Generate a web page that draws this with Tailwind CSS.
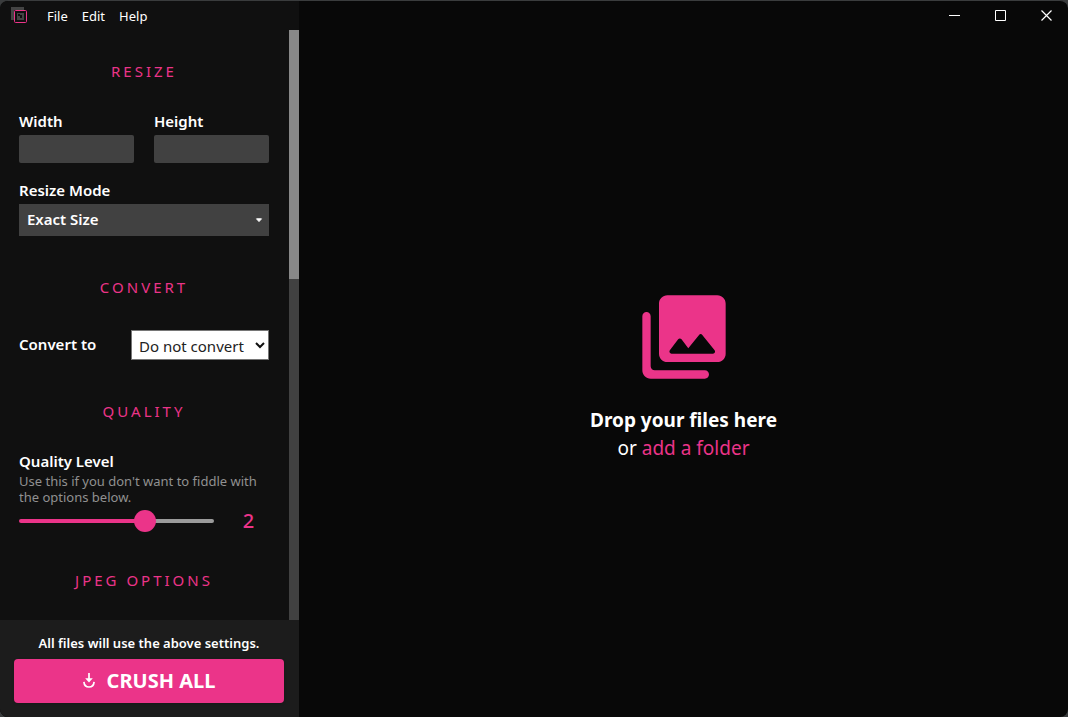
<!DOCTYPE html>
<html lang="en">
<head>
  <meta charset="UTF-8">
  <meta name="viewport" content="width=device-width, initial-scale=1.0">
  <title>Crush Images</title>
  <script src="https://cdn.jsdelivr.net/npm/@tailwindcss/browser@4"></script>
</head>

<body class="bg-[#3a3c3d] text-white h-screen overflow-hidden font-['Noto_Sans','Open_Sans',sans-serif]">

<div class="h-full flex rounded-lg overflow-hidden border-t border-[#3a3c3d] bg-[#080808]">

  <!-- Sidebar -->
  <aside class="w-[299px] shrink-0 flex flex-col bg-[#101010]">

    <!-- Menu bar -->
    <header class="h-[29px] shrink-0 flex items-center pl-[11px]">
      <svg class="w-[17px] h-[17px] mr-3" viewBox="0 0 17 17" fill="none">
        <path d="M1.500 13V1.500H13" stroke="#444" stroke-width="3"/>
        <rect x="3.500" y="3.500" width="12" height="12" rx="1" fill="#101010" stroke="#eb3489"/>
        <path d="M6 6h7v7H6z" fill="#444"/>
        <path d="M7 7h2v1h2v3H9V9H7z" fill="#101010"/>
      </svg>
      <nav class="flex pt-[2px] text-[13px]">
        <button class="px-[7px]">File</button>
        <button class="px-[7px]">Edit</button>
        <button class="px-[7px]">Help</button>
      </nav>
    </header>

    <div class="flex-1 min-h-0 flex">
      <!-- Settings -->
      <form class="flex-1 overflow-hidden pl-[19px] pr-5 pt-[31px]">
        <h2 class="text-center text-[15px] leading-5 tracking-[3px] text-[#eb3489]">RESIZE</h2>

        <div class="flex gap-5 mt-7">
          <div class="flex-1 min-w-0">
            <label for="width" class="block text-[15px] leading-6 font-semibold">Width</label>
            <input id="width" type="text" class="block w-full h-7 mt-[2px] px-2 rounded-xs bg-[#414141] text-[15px]">
          </div>
          <div class="flex-1 min-w-0">
            <label for="height" class="block text-[15px] leading-6 font-semibold">Height</label>
            <input id="height" type="text" class="block w-full h-7 mt-[2px] px-2 rounded-xs bg-[#414141] text-[15px]">
          </div>
        </div>

        <label for="mode" class="block mt-[15px] text-[15px] leading-6 font-semibold">Resize Mode</label>
        <div class="relative mt-[2px]">
          <select id="mode" class="block appearance-none w-full h-8 px-2 pb-[2px] bg-[#414141] text-[15px] font-semibold">
            <option>Exact Size</option>
          </select>
          <svg class="absolute right-[6px] top-[14px] w-2 h-[5px] pointer-events-none" viewBox="0 0 8 5" fill="#fff"><path d="M1.500 .8h5L4 3.600z" stroke="#fff" stroke-linejoin="round"/></svg>
        </div>

        <h2 class="mt-[41px] text-center text-[15px] leading-5 tracking-[3px] text-[#eb3489]">CONVERT</h2>

        <div class="flex items-center justify-between mt-[33px]">
          <label for="convert" class="pb-[2px] text-[15px] leading-6 font-semibold">Convert to</label>
          <div class="relative">
            <select id="convert" class="block appearance-none w-[138px] h-[30px] pl-[7px] pt-[2px] border border-[#767676] bg-white text-[#222] text-[15px]">
              <option>Do not convert</option>
            </select>
            <svg class="absolute right-1 top-3 w-[10px] h-[7px] pointer-events-none" viewBox="0 0 10 7" fill="none"><path d="M1 1l4 4 4-4" stroke="#111" stroke-width="2"/></svg>
          </div>
        </div>

        <h2 class="mt-[41px] text-center text-[15px] leading-5 tracking-[3px] text-[#eb3489]">QUALITY</h2>

        <label for="quality" class="block mt-7 text-[15px] leading-6 font-semibold">Quality Level</label>
        <p class="text-[13px] leading-4 text-[#919191]">Use this if you don't want to fiddle with the options below.</p>
        <div class="flex items-center mt-[2px]">
          <input id="quality" type="range" min="0" max="3" value="2"
            class="w-[195px] h-1 appearance-none rounded-xs bg-linear-to-r from-[#eb3489] from-65% to-[#9b9b9b] to-65% [&::-webkit-slider-thumb]:appearance-none [&::-webkit-slider-thumb]:w-[22px] [&::-webkit-slider-thumb]:h-[22px] [&::-webkit-slider-thumb]:rounded-full [&::-webkit-slider-thumb]:bg-[#eb3489]">
          <output for="quality" class="flex-1 text-center pl-[14px] text-xl leading-7 font-medium text-[#eb3489]">2</output>
        </div>

        <h2 class="mt-[35px] text-center text-[15px] leading-5 tracking-[3px] text-[#eb3489]">JPEG OPTIONS</h2>
      </form>

      <!-- Scrollbar -->
      <div class="w-[10px] bg-[#414141]">
        <div class="h-[249px] bg-[#888]"></div>
      </div>
    </div>

    <!-- Crush button -->
    <footer class="shrink-0 bg-[#1c1c1c] pl-[14px] pr-[15px] pt-[13px] pb-[14px]">
      <p class="text-center text-[13px] leading-5 mb-[6px] font-semibold">All files will use the above settings.</p>
      <button class="w-full h-11 rounded bg-[#eb3489] shadow flex items-center justify-center gap-3 text-xl font-bold">
        <svg class="w-3 h-4" viewBox="0 0 12 16" fill="none" stroke="#fff" stroke-width="1.7">
          <path d="M6 0v7"/>
          <path d="M2.200 5.200h7.600L6 9.600z" fill="#fff" stroke="none"/>
          <path d="M.9 8.800C1.200 12 3.200 14 6 14s4.800-2 5.100-5.200"/>
        </svg>
        CRUSH ALL
      </button>
    </footer>
  </aside>

  <!-- Drop area -->
  <main class="flex-1 flex flex-col">
    <div class="h-[29px] shrink-0 flex justify-end">
      <button aria-label="Minimize" class="w-[46px] pl-[2px] flex items-center justify-center">
        <svg class="w-[11px] h-[11px]" viewBox="0 0 11 11"><path d="M0 5.500h11" stroke="#fff"/></svg>
      </button>
      <button aria-label="Maximize" class="w-[46px] pl-[2px] flex items-center justify-center">
        <svg class="w-[11px] h-[11px]" viewBox="0 0 11 11" fill="none"><path d="M.5 .5h10v10H.5z" stroke="#fff"/></svg>
      </button>
      <button aria-label="Close" class="w-[46px] pl-[2px] flex items-center justify-center">
        <svg class="w-[11px] h-[11px]" viewBox="0 0 11 11"><path d="M.5 .5l10 10M10.500 .5l-10 10" stroke="#fff" stroke-width="1.200"/></svg>
      </button>
    </div>

    <div class="flex-1 flex flex-col items-center justify-center pt-[2px]">
      <svg class="w-[100px] h-[100px] mb-[19px]" viewBox="0 0 24 24" fill="#eb3489">
        <path fill-rule="evenodd" d="M22 16V4c0-1.100-.9-2-2-2H8c-1.100 0-2 .9-2 2v12c0 1.100.9 2 2 2h12c1.100 0 2-.9 2-2zm-10.600-3.470l1.630 2.180 2.580-3.220c.2-.25.580-.25.780 0l2.960 3.700c.26.33.030.81-.39.810H9c-.41 0-.65-.47-.4-.8l2-2.670c.2-.26.6-.26.8 0zM2 7v13c0 1.100.9 2 2 2h13c.55 0 1-.45 1-1s-.45-1-1-1H5c-.55 0-1-.45-1-1V7c0-.55-.45-1-1-1s-1 .45-1 1z"/>
      </svg>
      <p class="text-[19px] leading-7 font-bold">Drop your files here</p>
      <p class="text-[19px] leading-7">or <a href="#" class="text-[#eb3489]">add a folder</a></p>
    </div>
  </main>

</div>

</body>
</html>
